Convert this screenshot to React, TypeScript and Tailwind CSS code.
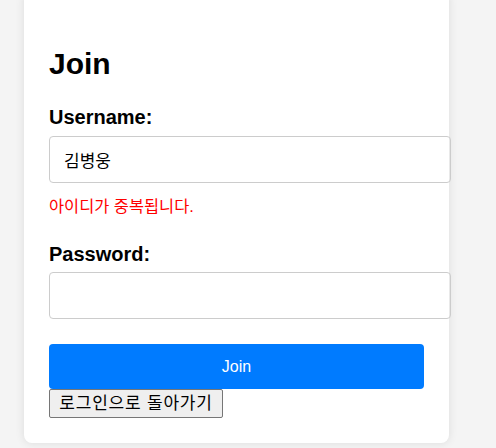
export default function App() {
  const font = { fontFamily: '"Liberation Sans", "Noto Sans CJK KR", sans-serif' };
  return (
    <div className="min-h-[448px] bg-[#f4f4f4] overflow-hidden" style={font}>
      <div className="ml-[24px] -mt-[8px] w-[425px] rounded-lg bg-white px-[25px] pt-[54px] pb-[25px] shadow-[0_0_10px_rgba(0,0,0,0.1)]">
        <h1 className="text-[30px] font-bold leading-[35px] text-black">Join</h1>

        <label className="mt-[25px] block text-[20px] font-bold leading-[23px] text-black">Username:</label>
        <input
          className="mt-[7px] block h-[47px] w-[402px] rounded border border-[#cccccc] px-[14px] text-[17px] text-black outline-none"
          defaultValue="김병웅"
        />
        <p className="mt-[13px] text-[16.4px] leading-[20px] text-[#ff0000]">아이디가 중복됩니다.</p>

        <label className="mt-[27px] block text-[20px] font-bold leading-[23px] text-black">Password:</label>
        <input
          type="password"
          className="mt-[6px] block h-[47px] w-[402px] rounded border border-[#cccccc] px-[14px] text-[16px] outline-none"
        />

        <button className="mt-[25px] flex h-[45px] w-[375px] items-center justify-center rounded bg-[#007bff] text-[16px] text-white">
          Join
        </button>
        <button className="flex h-[29px] w-[174px] items-center justify-center rounded-[2px] border border-[#767676] bg-[#efefef] text-[17px] tracking-[0.8px] text-black">
          로그인으로 돌아가기
        </button>
      </div>
    </div>
  );
}
